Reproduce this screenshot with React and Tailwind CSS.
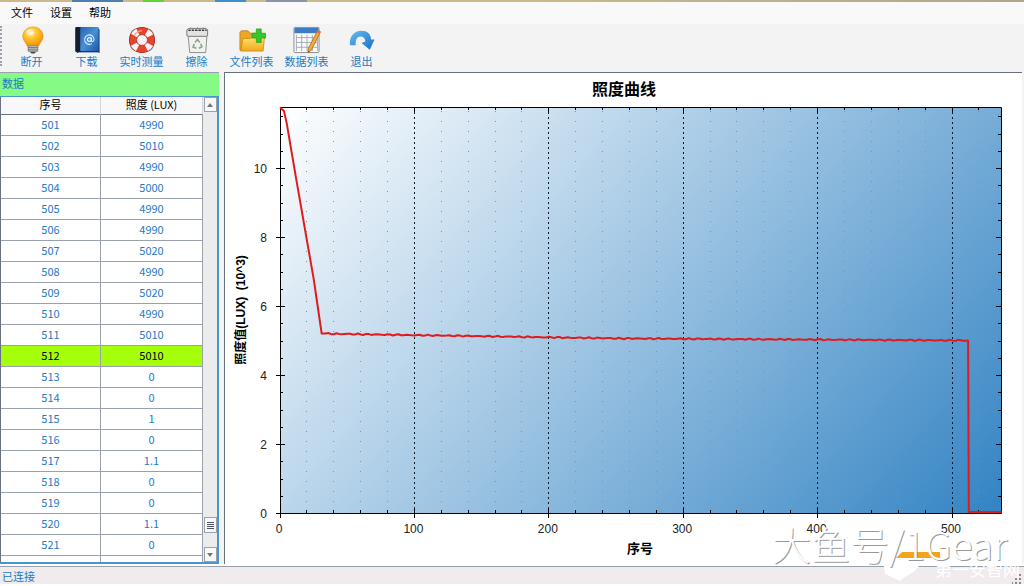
import React, { useState } from 'react'

const MENU_ITEMS = ['文件', '设置', '帮助']

const ROWS = [
  [501, '4990'], [502, '5010'], [503, '4990'], [504, '5000'], [505, '4990'], [506, '4990'],
  [507, '5020'], [508, '4990'], [509, '5020'], [510, '4990'], [511, '5010'], [512, '5010'],
  [513, '0'], [514, '0'], [515, '1'], [516, '0'], [517, '1.1'], [518, '0'],
  [519, '0'], [520, '1.1'], [521, '0'], [522, '0'],
]

const BulbIcon = () => (
  <svg viewBox="0 0 28 29" className="w-7 h-7">
    <defs>
      <radialGradient id="bulb" cx=".4" cy=".3" r=".75">
        <stop offset="0" stopColor="#fff0a0" />
        <stop offset=".4" stopColor="#ffc52e" />
        <stop offset="1" stopColor="#f08a00" />
      </radialGradient>
    </defs>
    <path d="M15 1c-6 0-10.500 4.200-10.500 9.700 0 4.600 3.500 6.300 4.700 10.300h11.600c1.200-4 4.700-5.700 4.700-10.300C25.500 5.200 21 1 15 1z" fill="url(#bulb)" stroke="#e59a1c" strokeWidth=".8" />
    <ellipse cx="12" cy="6.500" rx="4" ry="3" fill="#fff" opacity=".55" />
    <rect x="10" y="20.500" width="10" height="6" rx="1" fill="#c9c9c9" stroke="#777" strokeWidth=".8" />
    <path d="M10 22.500h10M10 24.800h10" stroke="#666" />
    <path d="M12 27h6l-1.500 1.500h-3z" fill="#444" />
  </svg>
)

const BookIcon = () => (
  <svg viewBox="0 0 28 29" className="w-7 h-7">
    <defs>
      <linearGradient id="book" x1="0" y1="0" x2="1" y2="1">
        <stop offset="0" stopColor="#2565b4" />
        <stop offset=".5" stopColor="#4b8fd6" />
        <stop offset="1" stopColor="#1d57a5" />
      </linearGradient>
    </defs>
    <path d="M3 1h22l2 3v24H4l-2-2V2z" fill="#1c3a66" />
    <rect x="2" y="1" width="6" height="26" rx="1" fill="#151e2c" />
    <rect x="7" y="1" width="19" height="25" rx="1" fill="url(#book)" />
    <path d="M5 27.500h21" stroke="#a9bcd2" />
    <circle cx="16.500" cy="14" r="2" fill="none" stroke="#e8f3ff" strokeWidth="1.200" />
    <path d="M18.500 12v3c0 1.800 2.800 1.500 2.800-1.200a4.900 4.900 0 1 0-2.300 4.500" fill="none" stroke="#e8f3ff" strokeWidth="1.100" />
  </svg>
)

const LifebuoyIcon = () => (
  <svg viewBox="0 0 30 29" className="w-[30px] h-7">
    <g fill="none">
      <path d="M5 5c3-3 17-3 20 0s3 16 0 19-17 3-20 0-3-16 0-19z" stroke="#8fa6b8" strokeWidth="1.200" />
      <circle cx="15" cy="14.500" r="9.500" stroke="#a72418" strokeWidth="8" />
      <circle cx="15" cy="14.500" r="9.500" stroke="#e6442f" strokeWidth="6.500" />
      <circle cx="15" cy="14.500" r="9.500" stroke="#f4f4f4" strokeWidth="7" strokeDasharray="5.500 9.420" strokeDashoffset="-4.700" />
      <path d="M7 10c1.500-3.500 4.500-5 8-5.200" stroke="#ff9a88" strokeWidth="1.200" />
      <circle cx="15" cy="14.500" r="5.500" stroke="#b55" strokeWidth=".6" />
    </g>
  </svg>
)

const TrashIcon = () => (
  <svg viewBox="0 0 28 29" className="w-7 h-7">
    <path d="M4.500 7h20l-1.500 20.500H6.500z" fill="#f1f1ee" stroke="#8c8c8c" />
    <path d="M3.500 4l2-1.500h18l1.500 1.500v6l-1.500.7h-18L3.500 10z" fill="#e3e3e1" stroke="#777" />
    <path d="M5 4.500h19" stroke="#3e3e3e" strokeWidth="1.600" strokeDasharray="2.500 1" />
    <path d="M7 2l3 1M14 1.500l2 1.500M20 1.800l2 1" stroke="#888" />
    <path d="M12 17l2.500-3 2.500 3M18 18.500l1 3-3 1.500M13.500 23l-3.500-1 1-3.500" fill="none" stroke="#8fa58a" strokeWidth="1.700" />
  </svg>
)

const FolderIcon = () => (
  <svg viewBox="0 0 28 29" className="w-7 h-7">
    <defs>
      <linearGradient id="folder" x1="0" y1="0" x2="0" y2="1">
        <stop offset="0" stopColor="#ffe271" />
        <stop offset="1" stopColor="#f2a81d" />
      </linearGradient>
    </defs>
    <path d="M1.500 25V6.500L3 5h7l2 2.500h12.500V25z" fill="#e9a925" stroke="#b87912" strokeWidth=".8" />
    <path d="M2.500 26l2-13h8l2-2h12.500l-1.500 15z" fill="url(#folder)" stroke="#c58518" strokeWidth=".8" />
    <path d="M18.500 3h5v4.500H28v5h-4.500V17h-5v-4.500H14v-5h4.500z" fill="#37c727" stroke="#1f9a18" strokeWidth=".7" />
  </svg>
)

const SheetIcon = () => (
  <svg viewBox="0 0 28 29" className="w-7 h-7">
    <rect x=".5" y="1.500" width="26" height="26" rx="1" fill="#fbfbfb" stroke="#8c8c8c" />
    <rect x="1" y="2" width="25" height="5.500" fill="#3c7cc4" />
    <path d="M3 12h22M3 17h22M3 22h22M3 9v17M8.500 9v17M14 9v17M19.500 9v17M25 9v17" stroke="#a3a9b0" />
    <path d="M25 4.500l3 1.500-9.500 19-3.500 2.500.5-4.500z" fill="#f3a93b" stroke="#a8651a" strokeWidth=".8" />
    <path d="M25 4.500l3 1.500-1 2-3-1.500z" fill="#e06a5c" />
    <path d="M15.200 26l.2 1.500 1.300-.9z" fill="#333" />
  </svg>
)

const ExitIcon = () => (
  <svg viewBox="0 0 28 29" className="w-7 h-7">
    <defs>
      <linearGradient id="exit" x1="0" y1="0" x2="1" y2="1">
        <stop offset="0" stopColor="#63bdf2" />
        <stop offset="1" stopColor="#1a6fc4" />
      </linearGradient>
    </defs>
    <path d="M1.500 20C.5 11 6 5 13.500 5c6 0 9.500 3.500 10 9h3.500l-5 10.500-8.500-7 4-1.500c-.5-3-2-5-5-5-3.500 0-5.500 3-5 9z" fill="url(#exit)" />
  </svg>
)

const TOOLS = [
  { label: '断开', Icon: BulbIcon },
  { label: '下载', Icon: BookIcon },
  { label: '实时测量', Icon: LifebuoyIcon },
  { label: '擦除', Icon: TrashIcon },
  { label: '文件列表', Icon: FolderIcon },
  { label: '数据列表', Icon: SheetIcon },
  { label: '退出', Icon: ExitIcon },
]

const Toolbar = () => (
  <div className="flex items-start pt-[2px] h-12 bg-[#f3f3f3] shrink-0">
    <div className="w-1 h-10 border-l-2 border-dotted border-gray-400"></div>
    {TOOLS.map(({ label, Icon }) => (
      <button key={label} className="w-[55px] shrink-0 flex flex-col items-center text-[11px] leading-[14px] text-[#1c7ac6] whitespace-nowrap">
        <Icon />
        {label}
      </button>
    ))}
  </div>
)

const DataPanel = () => {
  const [selected, setSelected] = useState(512)

  return (
    <div className="w-[219px] shrink-0 flex flex-col min-h-0">
      <div className="h-6 shrink-0 bg-[#84fb84] border-t border-gray-400 px-[2px] text-[11px] leading-5 text-[#1c7ac6]">数据</div>
      <div className="flex flex-1 min-h-0 border-t border-r-2 border-b-2 border-[#4a94d0] overflow-hidden">
        <div className="w-[203px] overflow-hidden">
          <table className="w-full table-fixed border-separate border-spacing-0 border-l border-gray-500 text-center text-[11px]">
            <thead>
              <tr className="h-[18px] bg-[#f8f8f8] text-black leading-[15px]">
                <th className="w-[100px] p-0 pb-[2px] font-normal border-r border-b border-r-gray-300 border-b-gray-500">序号</th>
                <th className="p-0 pb-[2px] font-normal border-r border-b border-r-gray-300 border-b-gray-500">照度 (LUX)</th>
              </tr>
            </thead>
            <tbody>
              {ROWS.map(([id, value]) => (
                <tr
                  key={id}
                  onClick={() => setSelected(id)}
                  className={`h-[21px] leading-[18px] ${id === selected ? 'bg-[#a6ff0a] text-black' : 'bg-white text-[#1c7ac6]'}`}
                >
                  <td className="p-0 pb-[2px] border-r border-b border-gray-400">{id}</td>
                  <td className="p-0 pb-[2px] border-r border-b border-gray-400">{value}</td>
                </tr>
              ))}
            </tbody>
          </table>
        </div>
        <div className="flex-1 flex flex-col items-center bg-[#ececec]">
          <button aria-label="▲" className="w-[13px] h-[15px] bg-[#f8f8f8] border border-gray-400 flex items-center justify-center">
            <svg viewBox="0 0 6 4" className="w-[6px] h-1"><path d="M0 4h6L3 0z" fill="#777" /></svg>
          </button>
          <div className="flex-1"></div>
          <div className="w-[13px] h-4 bg-[#f8f8f8] border border-gray-400 flex flex-col items-center justify-center gap-px">
            <div className="w-[7px] h-px bg-gray-600"></div>
            <div className="w-[7px] h-px bg-gray-600"></div>
            <div className="w-[7px] h-px bg-gray-600"></div>
            <div className="w-[7px] h-px bg-gray-600"></div>
          </div>
          <button aria-label="▼" className="w-[13px] h-[15px] mt-[14px] bg-[#f8f8f8] border border-gray-400 flex items-center justify-center">
            <svg viewBox="0 0 6 4" className="w-[6px] h-1"><path d="M0 0h6L3 4z" fill="#777" /></svg>
          </button>
        </div>
      </div>
    </div>
  )
}

// Plot area inside the chart's own coordinate system
const LEFT = 55
const RIGHT = 776
const TOP = 34
const BOTTOM = 440
const px = (x) => LEFT + x * 1.344
const py = (y) => BOTTOM - y * 34.5

const range = (from, to, step) => {
  const out = []
  for (let v = from; v <= to; v += step) out.push(v)
  return out
}

// Long flat part of the curve, with a little sensor noise
const curve = () => {
  const points = [[0, 11.75], [3, 11.65], [5, 11.3], [8, 10.6], [12, 9.7], [20, 7.9], [25, 6.8], [31, 5.2]]
  for (let x = 34; x < 512; x += 2) {
    const base = x < 250 ? 5.2 - ((x - 31) * 0.14) / 219 : 5.06 - ((x - 250) * 0.06) / 262
    points.push([x, base + Math.sin(x * 2.3) * 0.014 + Math.sin(x * 1.1) * 0.008])
  }
  points.push([512, 5], [512.5, 0.03], [537, 0.03])
  return points.map(([x, y]) => `${px(x).toFixed(1)},${py(y).toFixed(1)}`).join(' ')
}

const Chart = () => {
  const minorX = range(20, 520, 20).filter((v) => v % 100 !== 0)
  const majorX = range(100, 500, 100)

  return (
    <svg viewBox="0 0 797 491" className="block w-full h-full font-['Liberation_Sans','Noto_Sans_CJK_SC',sans-serif]">
      <defs>
        <linearGradient id="plot" gradientUnits="userSpaceOnUse" x1={LEFT} y1={TOP} x2={LEFT + 600} y2={TOP + 530}>
          <stop offset="0" stopColor="#ffffff" />
          <stop offset="1" stopColor="#3585c4" />
        </linearGradient>
      </defs>
      <text x="399" y="22" textAnchor="middle" className="text-[16px] font-bold">照度曲线</text>
      <rect x={LEFT} y={TOP} width={RIGHT - LEFT} height={BOTTOM - TOP} fill="url(#plot)" />

      {minorX.map((v) => (
        <g key={v} transform={`translate(${Math.round(px(v) - 0.5)} 0)`}>
          <path d={`M.5 ${TOP + 4}V${BOTTOM}`} stroke="#7f93a8" strokeDasharray="1 9" />
          <path d={`M.5 ${TOP}v3M.5 ${BOTTOM}v-3`} stroke="#000" />
        </g>
      ))}
      {majorX.map((v) => (
        <g key={v} transform={`translate(${Math.round(px(v) - 0.5)} 0)`}>
          <path d={`M.5 ${TOP}V${BOTTOM}`} stroke="#0c1a28" strokeDasharray="2 3" />
          <path d={`M.5 ${TOP}v5M.5 ${BOTTOM - 5}v10`} stroke="#000" />
        </g>
      ))}
      {range(0.5, 11.5, 0.5).map((v) => (
        <g key={v} transform={`translate(0 ${Math.round(py(v))})`}>
          {v % 2 === 0 ? (
            <path d={`M${LEFT - 4} .5h9M${RIGHT} .5h-5`} stroke="#000" />
          ) : (
            <path d={`M${LEFT} .5h3M${RIGHT} .5h-3`} stroke="#000" />
          )}
        </g>
      ))}
      <path d={`M${LEFT + 0.5} ${TOP + 0.5}H${RIGHT + 0.5}V${BOTTOM + 0.5}H${LEFT - 4}M${LEFT + 0.5} ${TOP}V${BOTTOM + 5}`} fill="none" stroke="#000" />

      <polyline points={curve()} fill="none" stroke="#e01b1b" strokeWidth="2" strokeLinejoin="round" />

      <g className="text-[12px]" fill="#222">
        {range(0, 500, 100).map((v) => (
          <text key={v} x={px(v) - 1} y="460" textAnchor="middle">{v}</text>
        ))}
        {range(0, 10, 2).map((v) => (
          <text key={v} x="42" y={py(v) + 5} textAnchor="end">{v}</text>
        ))}
      </g>
      <text x="415" y="480" textAnchor="middle" className="text-[13px] font-bold">序号</text>
      <text transform="translate(20 237) rotate(-90)" textAnchor="middle" className="text-[12px] font-bold whitespace-pre">照度值(LUX)  (10^3)</text>
    </svg>
  )
}

const Watermark = () => (
  <div className="absolute right-0 bottom-0 w-[256px] h-[70px] overflow-hidden pointer-events-none">
    <svg viewBox="0 0 256 70" className="absolute inset-0 w-full h-full">
      <path d="M128 42l6-6h38v6z" fill="#f2a51c" />
      <path d="M116 49c2-6 12-8 18-4 8-3 16-2 19 2l-6 8-10 6-5 4-6-3-9-4z" fill="#fff" />
    </svg>
    <div className="absolute right-1 bottom-[7px] text-[17px] leading-5 text-white whitespace-nowrap">第一安智网</div>
    <div className="absolute left-1 top-1 text-[39px] leading-[46px] font-light text-white whitespace-nowrap [text-shadow:1px_1px_0_#999]">大鱼号/1Gear</div>
  </div>
)

const App = () => {
  return (
    <div className="relative h-screen flex flex-col overflow-hidden bg-white font-['Noto_Sans_CJK_SC',sans-serif]">
      <div className="h-[2px] shrink-0 bg-linear-to-r from-[#cdb98f] via-[#c9bb8c] to-[#aea78c] flex">
        <div className="w-[7%]"></div>
        <div className="w-[5%] bg-[#4a7fae]"></div>
        <div className="w-[2%]"></div>
        <div className="w-[2%] bg-[#62d335]"></div>
        <div className="w-[5%]"></div>
        <div className="w-[3%] bg-[#3c8fd0]"></div>
        <div className="w-[2%]"></div>
        <div className="w-[4%] bg-[#8795a5]"></div>
      </div>
      <nav className="h-[22px] shrink-0 flex items-start gap-[17px] pt-[2px] px-[11px] bg-[#f9f9f9] text-[11px] leading-4 text-black">
        {MENU_ITEMS.map((item) => (
          <button key={item}>{item}</button>
        ))}
      </nav>
      <Toolbar />
      <main className="flex-1 flex gap-[5px] min-h-0 bg-[#f3f3f3]">
        <DataPanel />
        <div className="flex-1 min-w-0 mr-[2px] bg-white border-t border-l border-gray-500">
          <Chart />
        </div>
      </main>
      <footer className="relative h-[20px] mt-[2px] shrink-0 bg-[#f0ebec] border-t border-t-gray-400 border-b-2 border-b-white px-[2px] text-[11px] leading-[18px] text-[#1c7ac6]">
        已连接
        <svg viewBox="0 0 10 10" className="absolute right-[2px] bottom-0 w-[10px] h-[10px]">
          <path d="M7 0h2v2H7zM7 4h2v2H7zM3 4h2v2H3zM7 8h2v2H7zM3 8h2v2H3zM0 8h1v2H0z" fill="#888" />
        </svg>
      </footer>
      <Watermark />
    </div>
  )
}

export default App
